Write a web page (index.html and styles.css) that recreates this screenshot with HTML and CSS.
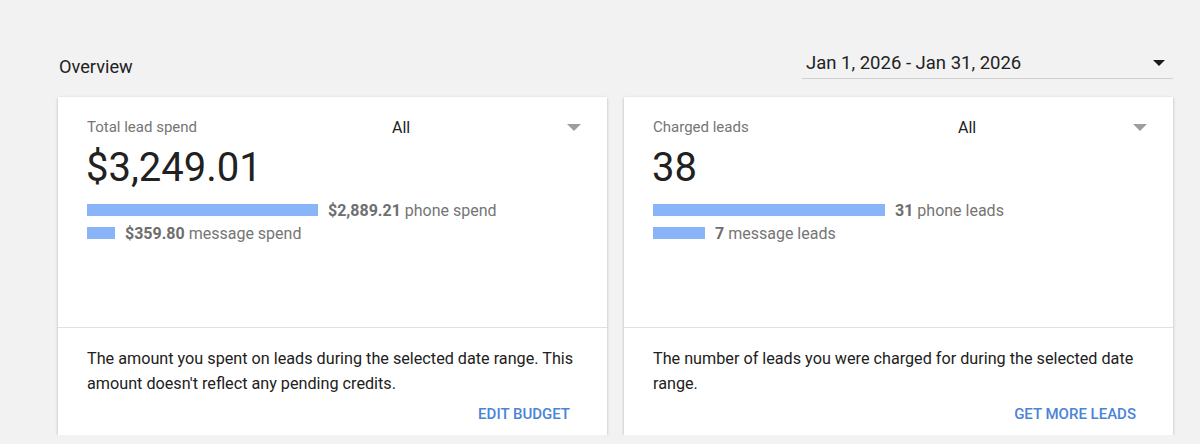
FILE: index.html
```html
<!DOCTYPE html>
<html lang="en">
<head>
<meta charset="utf-8">
<title>Overview</title>
<link rel="stylesheet" href="styles.css">
</head>
<body>
<main class="page">
  <header class="page-head">
    <h1 class="page-title">Overview</h1>
    <div class="date-select">
      <span class="date-text">Jan 1, 2026 - Jan 31, 2026</span>
      <svg class="caret caret-dark" width="12" height="6" viewBox="0 0 12 6"><path d="M0 0h12L6 6z"/></svg>
    </div>
  </header>

  <section class="cards">
    <article class="card">
      <div class="card-body">
        <div class="card-head">
          <span class="card-label">Total lead spend</span>
          <div class="filter">
            <span class="filter-text">All</span>
            <svg class="caret caret-light" width="14" height="7" viewBox="0 0 14 7"><path d="M0 0h14L7 7z"/></svg>
          </div>
        </div>
        <div class="metric">$3,249.01</div>
        <ul class="breakdown">
          <li class="row"><span class="bar" style="width:231px"></span><span class="row-text"><b>$2,889.21</b> phone spend</span></li>
          <li class="row"><span class="bar" style="width:28px"></span><span class="row-text"><b>$359.80</b> message spend</span></li>
        </ul>
      </div>
      <div class="card-foot">
        <p class="desc">The amount you spent on leads during the selected date range. This amount doesn't reflect any pending credits.</p>
        <div class="actions"><a class="action" href="#">Edit budget</a></div>
      </div>
    </article>

    <article class="card">
      <div class="card-body">
        <div class="card-head">
          <span class="card-label">Charged leads</span>
          <div class="filter">
            <span class="filter-text">All</span>
            <svg class="caret caret-light" width="14" height="7" viewBox="0 0 14 7"><path d="M0 0h14L7 7z"/></svg>
          </div>
        </div>
        <div class="metric">38</div>
        <ul class="breakdown">
          <li class="row"><span class="bar" style="width:232px"></span><span class="row-text"><b>31</b> phone leads</span></li>
          <li class="row"><span class="bar" style="width:52px"></span><span class="row-text"><b>7</b> message leads</span></li>
        </ul>
      </div>
      <div class="card-foot">
        <p class="desc">The number of leads you were charged for during the selected date range.</p>
        <div class="actions"><a class="action" href="#">Get more leads</a></div>
      </div>
    </article>
  </section>
</main>
</body>
</html>
```

FILE: styles.css
```css
* {
  box-sizing: border-box;
}

html,
body {
  margin: 0;
  padding: 0;
  background: #f2f2f2;
  font-family: Roboto, "Liberation Sans", Arial, sans-serif;
  color: #212121;
}

.page {
  width: 1115px;
  margin-left: 58px;
  padding-top: 49px;
}

/* Title row with the date range picker */
.page-head {
  display: flex;
  justify-content: space-between;
  align-items: flex-start;
  height: 48px;
}

.page-title {
  margin: 6px 0 0 1px;
  font-size: 18.2px;
  font-weight: 400;
  line-height: 24px;
  color: #222;
}

.date-select {
  width: 371px;
  height: 30px;
  display: flex;
  align-items: center;
  justify-content: space-between;
  padding: 0 8px 2px 4px;
  border-bottom: 1px solid #d0d0d0;
}

.date-text {
  font-size: 18.5px;
  line-height: 24px;
  color: #222;
}

.caret {
  display: block;
  flex: none;
}

.caret-dark {
  fill: #1a1a1a;
}

.caret-light {
  fill: #9e9e9e;
}

/* Metric cards */
.cards {
  display: grid;
  grid-template-columns: 549px 549px;
  gap: 17px;
}

.card {
  background: #fff;
  height: 338px;
  display: flex;
  flex-direction: column;
  box-shadow: 0 1px 3px rgba(0, 0, 0, 0.22), 0 1px 1px rgba(0, 0, 0, 0.08);
}

.card-body {
  height: 231px;
  padding: 20px 26px 0 29px;
  border-bottom: 1px solid #e0e0e0;
}

.card-head {
  display: flex;
  justify-content: space-between;
  align-items: center;
  height: 20px;
}

.card-label {
  font-size: 15px;
  color: #757575;
}

.filter {
  width: 189px;
  display: flex;
  align-items: center;
  justify-content: space-between;
}

.filter-text {
  font-size: 16px;
  color: #212121;
}

.metric {
  margin-top: 7px;
  margin-left: -1px;
  font-size: 40px;
  line-height: 48px;
  color: #212121;
}

.breakdown {
  list-style: none;
  margin: 9px 0 0;
  padding: 0;
  display: flex;
  flex-direction: column;
  gap: 5px;
}

.row {
  display: flex;
  align-items: center;
  gap: 10px;
  height: 18px;
}

.bar {
  display: block;
  height: 12px;
  background: #8ab4f8;
}

.row-text {
  font-size: 16px;
  color: #757575;
}

.row-text b {
  font-weight: 700;
  color: #6e6e6e;
}

.card-foot {
  flex: 1;
  display: flex;
  flex-direction: column;
  padding: 18px 26px 0 29px;
}

.desc {
  margin: 0;
  font-size: 16.2px;
  line-height: 25px;
  color: #212121;
}

.actions {
  display: flex;
  justify-content: flex-end;
  margin-top: 8px;
  padding-right: 11px;
}

.action {
  font-size: 15px;
  line-height: 20px;
  font-weight: 500;
  text-transform: uppercase;
  text-decoration: none;
  color: #4a84d6;
}
```
